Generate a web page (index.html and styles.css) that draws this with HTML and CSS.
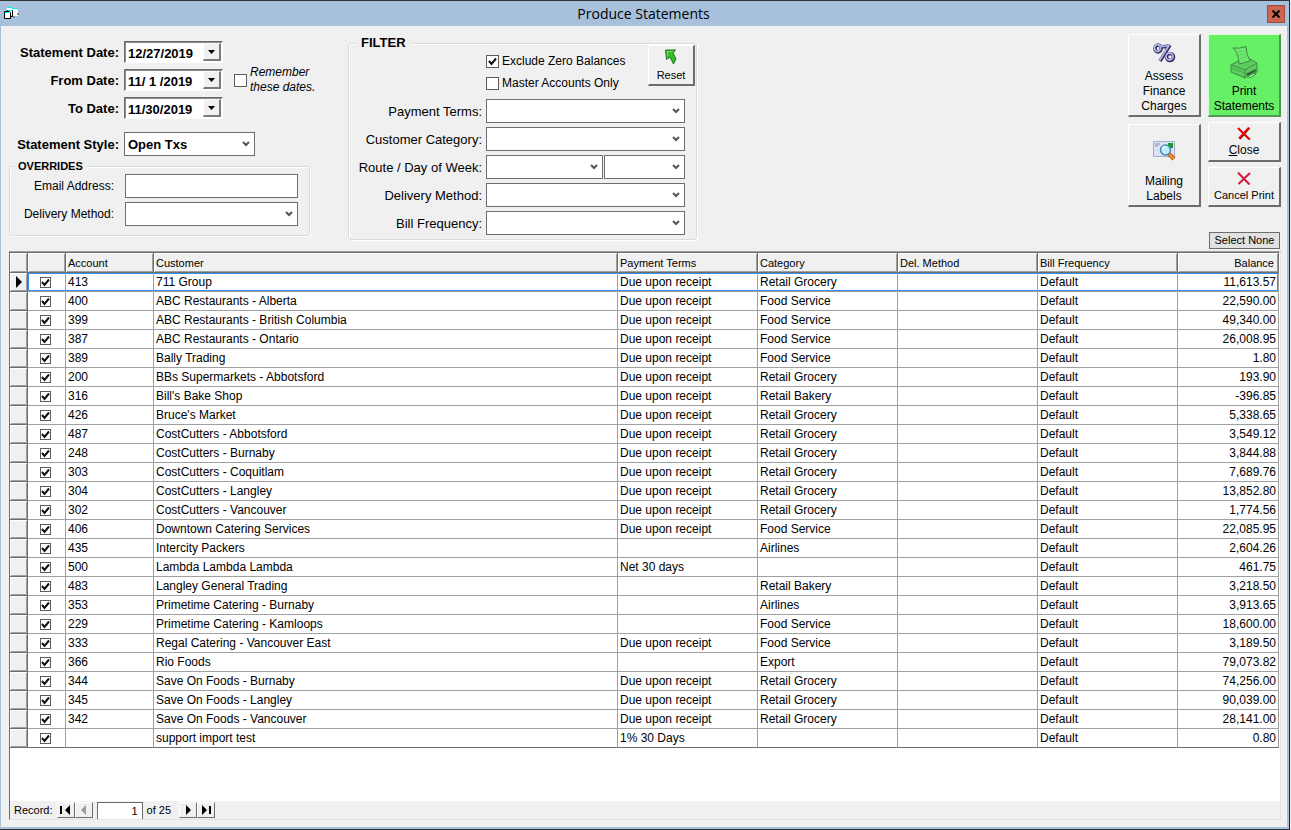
FILE: index.html
```html
<!DOCTYPE html>
<html lang="en">
<head>
    <meta charset="UTF-8">
    <meta name="viewport" content="width=device-width, initial-scale=1.0">
    <title>Produce Statements</title>
    <link rel="stylesheet" href="styles.css">
</head>
<body>
    <div class="window">
        <header class="title-bar">
            <svg class="app-icon" width="16" height="13" viewBox="0 0 16 13" aria-hidden="true">
                <path d="M3 1h4l1 1h6v7H3z" fill="#fff"/>
                <path d="M3 .5h4M8 1.500h6" stroke="#0ee"/>
                <path d="M13 6h2v2h-2zM9 9h2v2H9z" fill="#888"/>
                <path d="M3.500 3.500h5v6h-3z" fill="#fff" stroke="#000"/>
                <path d="M.5 4.500h5l1 1v6h-6z" fill="#fff" stroke="#000"/>
                <path d="M1 5.500h4M4 3.500h4" stroke="#0ee"/>
            </svg>
            <h1>Produce Statements</h1>
            <button type="button" class="window-close" aria-label="Close window">
                <svg width="10" height="8" viewBox="0 0 10 8"><path d="M1.500 0.500l7 7M8.500 0.500l-7 7" stroke="#000" stroke-width="2"/></svg>
            </button>
        </header>

        <main class="content">
            <form class="options">
                <div class="settings">
                    <div class="dates">
                        <label for="statement-date">Statement Date:</label>
                        <div class="date-box">
                            <input type="text" id="statement-date" value="12/27/2019">
                            <button type="button" aria-label="Pick statement date"></button>
                        </div>
                        <label for="from-date">From Date:</label>
                        <div class="date-box">
                            <input type="text" id="from-date" value="11/ 1 /2019">
                            <button type="button" aria-label="Pick from date"></button>
                        </div>
                        <label for="to-date">To Date:</label>
                        <div class="date-box">
                            <input type="text" id="to-date" value="11/30/2019">
                            <button type="button" aria-label="Pick to date"></button>
                        </div>
                        <div class="remember">
                            <input type="checkbox" id="remember" class="check">
                            <label for="remember">Remember<br>these dates.</label>
                        </div>
                    </div>
                    <div class="style-row">
                        <label for="statement-style">Statement Style:</label>
                        <select id="statement-style"><option>Open Txs</option></select>
                    </div>
                    <fieldset class="overrides">
                        <legend>OVERRIDES</legend>
                        <div class="overrides-grid">
                            <label for="email">Email Address:</label>
                            <input type="text" id="email">
                            <label for="override-delivery">Delivery Method:</label>
                            <select id="override-delivery"><option></option></select>
                        </div>
                    </fieldset>
                </div>

                <fieldset class="filter">
                    <legend>FILTER</legend>
                    <div class="filter-top">
                        <div class="filter-checks">
                            <label><input type="checkbox" class="check" checked>Exclude Zero Balances</label>
                            <label><input type="checkbox" class="check">Master Accounts Only</label>
                        </div>
                        <button type="button" class="raised reset">
                            <svg width="14" height="16" viewBox="0 0 14 16" aria-hidden="true">
                                <path d="M1.500 1h10L9 4l3 6-2.500 5L6 8l-3.500 2.500z" fill="#3cb82c" stroke="#1d7a1d"/>
                                <path d="M3 2.500h6M3.500 3v4" stroke="#7fdc63" fill="none"/>
                            </svg>
                            Reset
                        </button>
                    </div>
                    <div class="filter-grid">
                        <label for="payment-terms">Payment Terms:</label>
                        <select id="payment-terms"><option></option></select>
                        <label for="customer-category">Customer Category:</label>
                        <select id="customer-category"><option></option></select>
                        <label for="route">Route / Day of Week:</label>
                        <div class="route-row">
                            <select id="route"><option></option></select>
                            <select aria-label="Day of week"><option></option></select>
                        </div>
                        <label for="delivery-method">Delivery Method:</label>
                        <select id="delivery-method"><option></option></select>
                        <label for="bill-frequency">Bill Frequency:</label>
                        <select id="bill-frequency"><option></option></select>
                    </div>
                </fieldset>

                <div class="actions">
                    <div class="action-columns">
                        <div class="action-column">
                            <button type="button" class="raised tall">
                                <svg width="24" height="22" viewBox="0 0 24 22" aria-hidden="true">
                                    <g fill="none" stroke="#2b2b58" stroke-width="3.500">
                                        <ellipse cx="6" cy="6.500" rx="3" ry="3.500"/>
                                        <ellipse cx="18" cy="15" rx="3.500" ry="3.500"/>
                                        <path d="M18 3L8 19M8 4.500q5 1 9-1"/>
                                    </g>
                                    <g fill="none" stroke="#b4b4e8" stroke-width="1.800">
                                        <ellipse cx="5.500" cy="6" rx="3" ry="3.500"/>
                                        <ellipse cx="17.500" cy="14.500" rx="3.500" ry="3.500"/>
                                        <path d="M17.500 2.500l-10 16M8 4q5 1 9-1"/>
                                    </g>
                                </svg>
                                <span>Assess<br>Finance<br>Charges</span>
                            </button>
                            <button type="button" class="raised tall mailing">
                                <svg width="23" height="20" viewBox="0 0 23 20" aria-hidden="true">
                                    <path d="M.5.500h21v15H.5z" fill="#dde3fa" stroke="#a5adc6"/>
                                    <path d="M2 3h5M2 5h3" stroke="#888"/>
                                    <path d="M15 2h5v5h-5z" fill="#159a2c"/>
                                    <path d="M16 13l5 5" stroke="#b54b12" stroke-width="4"/>
                                    <path d="M16 13l5 5" stroke="#ff9b32" stroke-width="2"/>
                                    <circle cx="12.500" cy="9" r="5" fill="#b8ecfb" stroke="#4d86a8" stroke-width="1.500"/>
                                    <path d="M9.500 8a3 3 0 0 1 3-2.500" fill="none" stroke="#fff" stroke-width="1.500"/>
                                </svg>
                                <span>Mailing<br>Labels</span>
                            </button>
                        </div>
                        <div class="action-column">
                            <button type="button" class="raised tall print">
                                <svg width="28" height="33" viewBox="0 0 28 33" aria-hidden="true">
                                    <g stroke="#3f8a45" stroke-linejoin="round">
                                        <path d="M1 19l7-4 12-2 7 4v9l-12 6L1 26z" fill="#5ccc5c"/>
                                        <path d="M3 2q6 1 13-1.500Q16 8 20 15L9 18Q9 8 3 2z" fill="#6cea6c"/>
                                        <path d="M1 19l14 5 12-7" fill="none"/>
                                        <path d="M15 24v8" fill="none"/>
                                        <path d="M1 22l14 5" fill="none" stroke="#4aa850"/>
                                        <path d="M16 28l10-5v2l-8 5z" fill="#2a5c2e"/>
                                        <path d="M18 30l6-3 2 1-6 4z" fill="#8cf58c"/>
                                        <path d="M8 6l7-1M9 9l7-1M10 12l7-1" fill="none" stroke="#5fcf62"/>
                                    </g>
                                </svg>
                                <span>Print<br>Statements</span>
                            </button>
                            <button type="button" class="raised short">
                                <svg width="14" height="13" viewBox="0 0 14 13" aria-hidden="true">
                                    <path d="M2 2l11 10.500M12.500 1L3 12" stroke="#400" stroke-width="1.500"/>
                                    <path d="M1 1l11 11M12 .5L2 11.500" stroke="#f00808" stroke-width="2"/>
                                </svg>
                                <span><u>C</u>lose</span>
                            </button>
                            <button type="button" class="raised short cancel">
                                <svg width="14" height="13" viewBox="0 0 14 13" aria-hidden="true">
                                    <path d="M1 .5l11.500 12M13 1L1.500 12" stroke="#d01c3c" stroke-width="2"/>
                                </svg>
                                <span>Cancel Print</span>
                            </button>
                        </div>
                    </div>
                    <button type="button" class="select-none">Select None</button>
                </div>
            </form>

            <section class="grid-panel">
                <table class="statements">
                    <colgroup>
                        <col class="col-selector"><col class="col-check"><col class="col-account"><col>
                        <col class="col-data"><col class="col-data"><col class="col-data"><col class="col-data">
                        <col class="col-balance">
                    </colgroup>
                    <thead>
                        <tr>
                            <th></th><th></th><th>Account</th><th>Customer</th><th>Payment Terms</th>
                            <th>Category</th><th>Del. Method</th><th>Bill Frequency</th><th class="number">Balance</th>
                        </tr>
                    </thead>
                    <tbody id="rows"></tbody>
                </table>
                <nav class="record-nav">
                    <label for="record">Record:</label>
                    <div class="nav-group">
                        <button type="button" aria-label="First record"><svg width="11" height="10" viewBox="0 0 11 10"><path d="M0 1h2v8H0zM10 0v10L5 5z"/></svg></button>
                        <button type="button" aria-label="Previous record" disabled><svg width="11" height="10" viewBox="0 0 11 10"><path d="M8 0v10L3 5z"/></svg></button>
                    </div>
                    <input type="text" id="record" value="1">
                    <span>of 25</span>
                    <div class="nav-group next">
                        <button type="button" aria-label="Next record"><svg width="11" height="10" viewBox="0 0 11 10"><path d="M3 0v10l5-5z"/></svg></button>
                        <button type="button" aria-label="Last record"><svg width="11" height="10" viewBox="0 0 11 10"><path d="M1 0v10l5-5zM8 1h2v8H8z"/></svg></button>
                    </div>
                </nav>
            </section>
        </main>
    </div>

    <script>
        const DUE = 'Due upon receipt';

        // account, customer, payment terms, category, balance
        const customers = [
            ['413', '711 Group', DUE, 'Retail Grocery', '11,613.57'],
            ['400', 'ABC Restaurants - Alberta', DUE, 'Food Service', '22,590.00'],
            ['399', 'ABC Restaurants - British Columbia', DUE, 'Food Service', '49,340.00'],
            ['387', 'ABC Restaurants - Ontario', DUE, 'Food Service', '26,008.95'],
            ['389', 'Bally Trading', DUE, 'Food Service', '1.80'],
            ['200', 'BBs Supermarkets - Abbotsford', DUE, 'Retail Grocery', '193.90'],
            ['316', "Bill's Bake Shop", DUE, 'Retail Bakery', '-396.85'],
            ['426', "Bruce's Market", DUE, 'Retail Grocery', '5,338.65'],
            ['487', 'CostCutters - Abbotsford', DUE, 'Retail Grocery', '3,549.12'],
            ['248', 'CostCutters - Burnaby', DUE, 'Retail Grocery', '3,844.88'],
            ['303', 'CostCutters - Coquitlam', DUE, 'Retail Grocery', '7,689.76'],
            ['304', 'CostCutters - Langley', DUE, 'Retail Grocery', '13,852.80'],
            ['302', 'CostCutters - Vancouver', DUE, 'Retail Grocery', '1,774.56'],
            ['406', 'Downtown Catering Services', DUE, 'Food Service', '22,085.95'],
            ['435', 'Intercity Packers', '', 'Airlines', '2,604.26'],
            ['500', 'Lambda Lambda Lambda', 'Net 30 days', '', '461.75'],
            ['483', 'Langley General Trading', '', 'Retail Bakery', '3,218.50'],
            ['353', 'Primetime Catering - Burnaby', '', 'Airlines', '3,913.65'],
            ['229', 'Primetime Catering - Kamloops', '', 'Food Service', '18,600.00'],
            ['333', 'Regal Catering - Vancouver East', DUE, 'Food Service', '3,189.50'],
            ['366', 'Rio Foods', '', 'Export', '79,073.82'],
            ['344', 'Save On Foods - Burnaby', DUE, 'Retail Grocery', '74,256.00'],
            ['345', 'Save On Foods - Langley', DUE, 'Retail Grocery', '90,039.00'],
            ['342', 'Save On Foods - Vancouver', DUE, 'Retail Grocery', '28,141.00'],
            ['', 'support import test', '1% 30 Days', '', '0.80']
        ];

        const marker = '<svg width="6" height="12" viewBox="0 0 6 12"><path d="M0 0v12l6-6z"/></svg>';

        document.getElementById('rows').innerHTML = customers.map(([account, customer, terms, category, balance], i) => `
            <tr class="${i === 0 ? 'current' : ''}">
                <td class="selector">${i === 0 ? marker : ''}</td>
                <td class="pick"><input type="checkbox" class="check small" aria-label="Include ${customer}" checked></td>
                <td>${account}</td>
                <td>${customer}</td>
                <td>${terms}</td>
                <td>${category}</td>
                <td></td>
                <td>Default</td>
                <td class="number">${balance}</td>
            </tr>`).join('');
    </script>
</body>
</html>
```
FILE: styles.css
```css
* {
    box-sizing: border-box;
}

body {
    margin: 0;
    background: #f0f0f0;
    color: #000;
    font-family: "Liberation Sans", Arial, sans-serif;
    font-size: 12px;
}

button, input, select {
    font: inherit;
    color: inherit;
    margin: 0;
    padding: 0;
    border-radius: 0;
}

.window {
    display: flex;
    flex-direction: column;
    min-height: 100vh;
    margin-right: 1px;
    background: #f0f0f0;
    border-top: 1px solid #333;
    border-right: 1px solid #222;
    border-bottom: 1px solid #333;
}

/* Title bar */
.title-bar {
    display: flex;
    align-items: center;
    height: 25px;
    padding: 0 4px 0 4px;
    background: #a7c0dc;
}

.title-bar h1 {
    flex: 1;
    margin: 0;
    font-family: "Open Sans", sans-serif;
    font-size: 14px;
    font-weight: normal;
    line-height: 20px;
    text-align: center;
}

.window-close {
    display: flex;
    align-items: center;
    justify-content: center;
    width: 18px;
    height: 18px;
    background: #cc6450;
    border: 1px solid #a04a3c;
}

.content {
    flex: 1;
    display: flex;
    flex-direction: column;
    padding: 0 6px 7px 8px;
    border: solid #a7c0dc;
    border-width: 0 2px 2px 1px;
}

.options {
    display: flex;
    align-items: flex-start;
    padding-bottom: 2px;
}

/* Shared controls */
select, .overrides input {
    width: 100%;
    height: 24px;
    background-color: #fff;
    border: 1px solid #6d6d6d;
}

select {
    appearance: none;
    padding: 0 20px 0 3px;
    background-image: url("data:image/svg+xml,%3Csvg xmlns='http://www.w3.org/2000/svg' width='8' height='6'%3E%3Cpath d='M1 1l3 3 3-3' fill='none' stroke='%23555' stroke-width='2'/%3E%3C/svg%3E");
    background-repeat: no-repeat;
    background-position: right 4px center;
}

.check {
    appearance: none;
    flex: none;
    width: 13px;
    height: 13px;
    background: #fff center no-repeat;
    border: 1px solid #5c5c5c;
}

.check:checked {
    background-image: url("data:image/svg+xml,%3Csvg xmlns='http://www.w3.org/2000/svg' width='9' height='9'%3E%3Cpath d='M1 4l2.500 3L8 1.500' fill='none' stroke='%23111' stroke-width='2'/%3E%3C/svg%3E");
}

.check.small {
    display: block;
    width: 11px;
    height: 11px;
    margin-left: 10px;
}

fieldset {
    min-width: 0;
    margin: 0;
    border: 1px solid #d3dde6;
    border-radius: 3px;
    box-shadow: inset 1px 1px #fff, 1px 1px #fff;
}

legend {
    padding: 0 4px;
    background: #f0f0f0;
    font-weight: bold;
    line-height: 14px;
}

.raised {
    display: flex;
    flex-direction: column;
    align-items: center;
    background: #f0f0f0;
    border: solid;
    border-width: 1px 2px 2px 1px;
    border-color: #fff #6d6d6d #6d6d6d #fff;
    line-height: 15px;
}

/* Statement settings */
.settings {
    width: 301px;
    padding-top: 15px;
}

.dates {
    display: grid;
    grid-template-columns: 110px 99px 1fr;
    gap: 6px 5px;
    align-items: center;
    font-size: 13px;
    font-weight: bold;
    text-align: right;
}

.date-box {
    display: flex;
    height: 22px;
    background: #fff;
    border: 1px solid;
    border-color: #6d6d6d #fff #fff #6d6d6d;
    box-shadow: inset 1px 1px #8a8a8a;
}

.date-box input {
    flex: 1;
    width: 0;
    padding-top: 2px;
    padding-left: 3px;
    background: none;
    border: none;
}

.date-box button {
    width: 18px;
    margin: 1px 1px 1px 0;
    background: #f0f0f0 url("data:image/svg+xml,%3Csvg xmlns='http://www.w3.org/2000/svg' width='7' height='4'%3E%3Cpath d='M0 0h7L3.500 4z'/%3E%3C/svg%3E") center no-repeat;
    border: solid;
    border-width: 1px 2px 2px 1px;
    border-color: #fff #7a7a7a #7a7a7a #fff;
}

.remember {
    grid-column: 3;
    grid-row: 1 / 4;
    display: flex;
    align-items: center;
    gap: 3px;
    padding-left: 6px;
    font-size: 12px;
    font-style: italic;
    font-weight: normal;
    line-height: 15px;
    text-align: left;
    white-space: nowrap;
}

.style-row {
    display: grid;
    grid-template-columns: 110px 131px;
    gap: 5px;
    align-items: center;
    margin-top: 13px;
    font-size: 13px;
    font-weight: bold;
    text-align: right;
}

.overrides {
    margin-top: 3px;
    padding: 1px 11px 9px 0;
}

.overrides legend {
    margin-left: 4px;
    font-size: 11px;
}

.overrides-grid {
    display: grid;
    grid-template-columns: 104px 1fr;
    gap: 4px 11px;
    align-items: center;
    text-align: right;
}

/* Filter */
.filter {
    width: 349px;
    margin-left: 38px;
    margin-top: 10px;
    padding: 0 0 4px;
}

.filter legend {
    margin-left: 8px;
    font-size: 13px;
}

.filter-top {
    display: flex;
    justify-content: space-between;
    height: 49px;
    padding-left: 137px;
}

.filter-checks label {
    display: flex;
    align-items: center;
    gap: 3px;
    height: 22px;
}

.reset {
    width: 47px;
    height: 41px;
    margin-top: -5px;
    margin-right: 1px;
    padding-top: 3px;
    font-size: 11px;
}

.reset svg {
    margin-bottom: 3px;
}

.filter-grid {
    display: grid;
    grid-template-columns: 133px 1fr;
    gap: 4px;
    align-items: center;
    padding-right: 11px;
    font-size: 13px;
    text-align: right;
}

.route-row {
    display: grid;
    grid-template-columns: 117px 1fr;
    gap: 1px;
}

/* Action buttons */
.actions {
    display: flex;
    flex-direction: column;
    align-items: flex-end;
    margin-left: auto;
    padding-top: 8px;
}

.action-columns {
    display: flex;
    gap: 7px;
}

.action-column {
    display: flex;
    flex-direction: column;
    gap: 5px;
    width: 73px;
}

.action-column:first-child {
    gap: 7px;
}

.tall {
    height: 83px;
    justify-content: flex-end;
    gap: 5px;
    padding-bottom: 1px;
}

.tall.mailing {
    gap: 13px;
}

.print {
    background: #66f066;
    border-color: #d8ffd8 #4f9a4f #4f9a4f #d8ffd8;
}

.short {
    height: 40px;
    justify-content: flex-end;
    gap: 3px;
    padding-bottom: 2px;
}

.cancel {
    font-size: 11px;
}

.select-none {
    width: 71px;
    height: 17px;
    margin-top: 25px;
    margin-right: 1px;
    background: #e1e1e1;
    border: 1px solid #6d6d6d;
    font-size: 11px;
    line-height: 15px;
}

/* Statement list */
.grid-panel {
    flex: 1;
    display: flex;
    flex-direction: column;
    background: #fff;
    border: 1px solid;
    border-color: #a0a0a0 #e3e3e3 #e3e3e3 #6d6d6d;
}

.statements {
    width: calc(100% - 1px);
    table-layout: fixed;
    border-collapse: separate;
    border-spacing: 0;
    border-top: 1px solid #6d6d6d;
}

.col-selector {
    width: 18px;
}

.col-check {
    width: 38px;
}

.col-account {
    width: 88px;
}

.col-data {
    width: 140px;
}

.col-balance {
    width: 101px;
}

.statements th {
    height: 20px;
    padding: 0 2px;
    background: #f0f0f0;
    border-right: 1px solid #6d6d6d;
    border-bottom: 1px solid #6d6d6d;
    box-shadow: inset 1px 1px #fff, inset -1px -1px #a0a0a0;
    font-size: 11px;
    font-weight: normal;
    text-align: left;
}

.statements td {
    height: 19px;
    padding: 0 2px;
    border-right: 1px solid #a0a0a0;
    border-bottom: 1px solid #a0a0a0;
    line-height: 17px;
    white-space: nowrap;
}

.statements .number {
    text-align: right;
}

.statements th.number {
    padding-right: 4px;
}

.statements td.selector {
    padding: 0 0 0 6px;
    background: #f0f0f0;
    border-color: #6d6d6d;
    box-shadow: inset 1px 1px #fff, inset -1px -1px #a0a0a0;
    line-height: 0;
}

.statements .current td:not(.selector) {
    box-shadow: inset 0 1px #3390ee, inset 0 -1px #3390ee;
}

.statements .current td.pick {
    box-shadow: inset 1px 1px #3390ee, inset 0 -1px #3390ee;
}

.statements .current td.number:last-child {
    box-shadow: inset -1px 1px #3390ee, inset 0 -1px #3390ee;
}

.statements tr:last-child td {
    border-bottom-color: #6d6d6d;
}

/* Record navigator */
.record-nav {
    display: flex;
    align-items: center;
    height: 18px;
    margin-top: auto;
    padding-left: 4px;
    background: #f0f0f0;
    font-size: 11px;
}

.nav-group {
    display: flex;
    margin-left: 4px;
}

.nav-group.next {
    margin-left: 8px;
}

.nav-group button {
    display: flex;
    align-items: center;
    justify-content: center;
    width: 18px;
    height: 16px;
    background: #f0f0f0;
    border: 1px solid;
    border-color: #fff #6d6d6d #6d6d6d #fff;
}

.nav-group button:disabled {
    fill: #999;
}

.record-nav input {
    width: 46px;
    height: 17px;
    margin: 0 4px;
    padding-right: 4px;
    border: 1px solid #6d6d6d;
    border-bottom: none;
    background: #fff;
    text-align: right;
}
```
